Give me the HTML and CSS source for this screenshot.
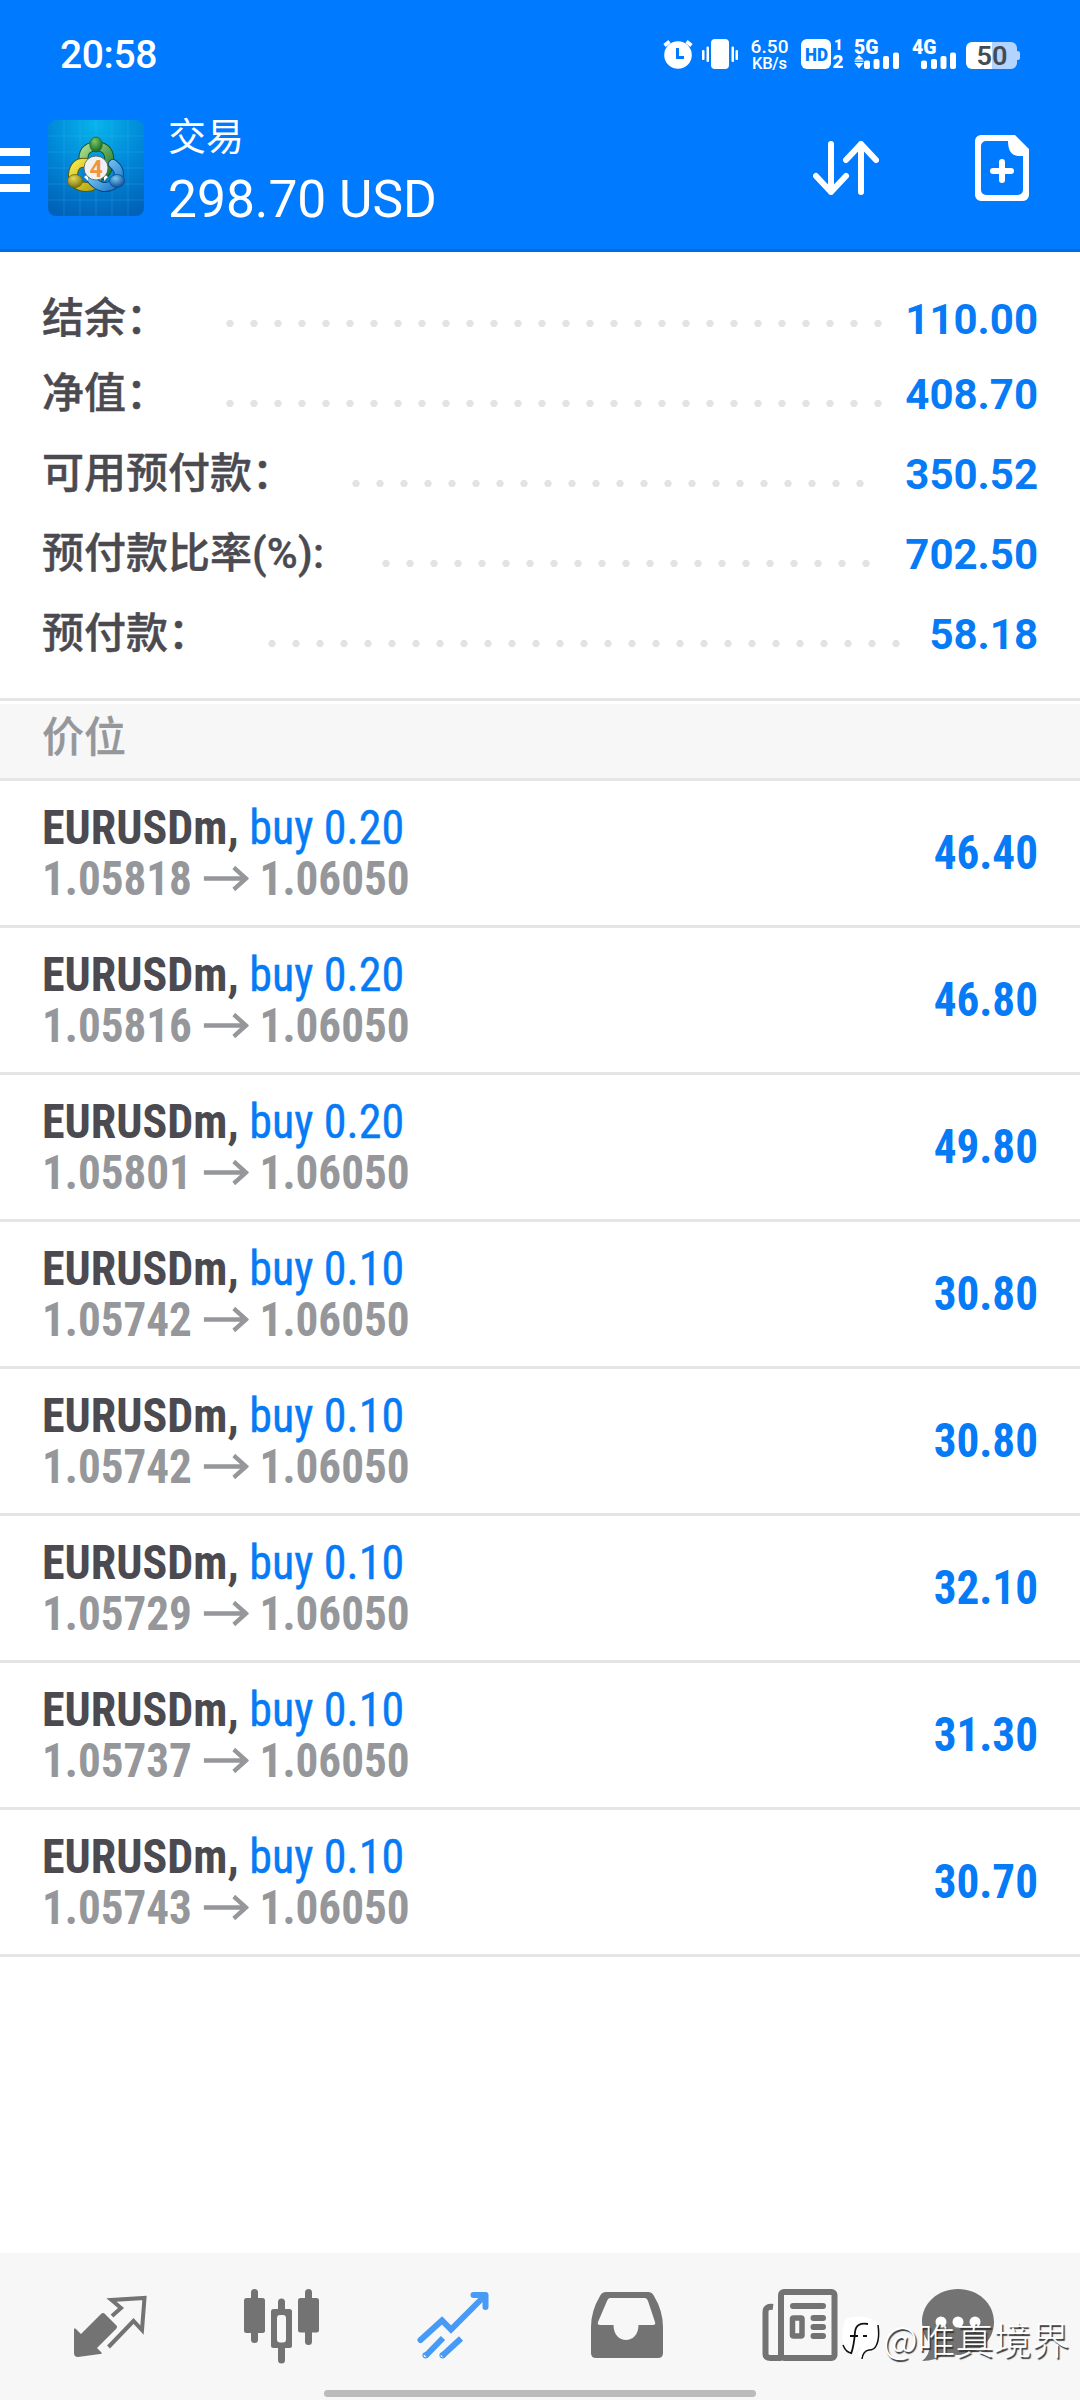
FILE: index.html
```html
<!DOCTYPE html>
<html lang="zh-CN">
<head>
<meta charset="utf-8">
<title>交易</title>
<link rel="stylesheet" href="styles.css">
</head>
<body>
<div class="app">
  <header class="header">
    <div class="status">
      <span class="clock">20:58</span>
      <svg class="status-icons" width="366" height="40" viewBox="660 34 366 40" fill="#fff">
        <circle cx="678" cy="55" r="13.8"/>
        <path d="M664.5 45.5l5-4M691.500 45.500l-5-4" stroke="#fff" stroke-width="3.600" fill="none"/>
        <path d="M677.500 48v9.500h6.500" stroke="#007aff" stroke-width="3" fill="none"/>
        <rect x="711" y="39" width="18" height="30" rx="4"/>
        <rect x="702" y="50" width="2.500" height="10" rx="1"/><rect x="706.500" y="46.500" width="2.500" height="15.500" rx="1"/>
        <rect x="731.500" y="46.500" width="2.500" height="15.500" rx="1"/><rect x="735.500" y="50" width="2.500" height="10" rx="1"/>
        <text x="750.500" y="53" font-size="19" font-weight="500" textLength="38">6.50</text>
        <text x="752" y="69" font-size="16.500" font-weight="500" textLength="35">KB/s</text>
        <rect x="801" y="39" width="30" height="30" rx="6"/>
        <text x="805" y="61" font-size="19" font-weight="900" fill="#007aff" textLength="23" lengthAdjust="spacingAndGlyphs">HD</text>
        <text x="834" y="50" font-size="15" font-weight="900">1</text>
        <text x="832.500" y="68" font-size="18" font-weight="900" textLength="11" lengthAdjust="spacingAndGlyphs">2</text>
        <text x="854" y="53.500" font-size="19.500" font-weight="900" textLength="24.500" lengthAdjust="spacingAndGlyphs">5G</text>
        <path d="M859 55l4.500 4.500h-9zM859 68.500l4.500-5.500h-9zM854.500 60.500h9v1.200h-9z"/>
        <rect x="864" y="60.500" width="6" height="8.500" rx="2"/><rect x="873.500" y="59" width="6" height="10" rx="2"/><rect x="883" y="56" width="6" height="13" rx="2"/><rect x="893" y="52.500" width="6" height="16.500" rx="2"/>
        <text x="912" y="53.500" font-size="19.500" font-weight="900" textLength="24.500" lengthAdjust="spacingAndGlyphs">4G</text>
        <rect x="921" y="60.500" width="6" height="8.500" rx="2"/><rect x="931" y="59" width="6" height="10" rx="2"/><rect x="940.500" y="56" width="6" height="13" rx="2"/><rect x="950" y="52.500" width="6" height="16.500" rx="2"/>
        <path d="M992 42h19a6 6 0 0 1 6 6v3q3 0 3 2v5q0 2-3 2v3a6 6 0 0 1-6 6h-19z" fill="#b2d4ff"/>
        <path d="M992 42h-20a6 6 0 0 0-6 6v15a6 6 0 0 0 6 6h20z"/>
        <text x="976.500" y="65" font-size="25" font-weight="600" fill="#444b55" textLength="31" lengthAdjust="spacingAndGlyphs">50</text>
      </svg>
    </div>
    <div class="toolbar">
      <div class="menu"><i></i><i></i><i></i></div>
      <svg class="logo" width="96" height="96" viewBox="0 0 96 96">
        <defs>
          <radialGradient id="bg" cx=".5" cy=".05" r="1"><stop offset="0" stop-color="#08b4ea"/><stop offset=".5" stop-color="#0088d8"/><stop offset="1" stop-color="#0062b8"/></radialGradient>
          <linearGradient id="gr" x2="1" y2="1"><stop offset="0" stop-color="#a8dc90"/><stop offset="1" stop-color="#1f7a2c"/></linearGradient>
          <linearGradient id="ye" x2="1" y2="1"><stop offset="0" stop-color="#f3e648"/><stop offset="1" stop-color="#b0a418"/></linearGradient>
          <linearGradient id="bl" x2="1" y2="1"><stop offset="0" stop-color="#8fd8fa"/><stop offset="1" stop-color="#1a78cc"/></linearGradient>
          <radialGradient id="hg" cx=".4" cy=".3" r=".7"><stop offset="0" stop-color="#7cc66c"/><stop offset="1" stop-color="#176a22"/></radialGradient>
          <radialGradient id="hy" cx=".4" cy=".3" r=".7"><stop offset="0" stop-color="#e6da58"/><stop offset="1" stop-color="#80760c"/></radialGradient>
          <radialGradient id="hb" cx=".4" cy=".3" r=".7"><stop offset="0" stop-color="#7cc8f2"/><stop offset="1" stop-color="#0c4f98"/></radialGradient>
        </defs>
        <rect width="96" height="96" rx="8" fill="url(#bg)"/>
        <path d="M16 0v96M32 0v96M48 0v96M64 0v96M80 0v96M0 16h96M0 32h96M0 48h96M0 64h96M0 80h96" stroke="#5cc4ff" stroke-opacity=".2"/>
        <g fill="none" stroke-linecap="round">
          <path d="M36 42q-3-14 12-16q15 1 13 17q-1 8-6 12" stroke="#12561c" stroke-width="10"/>
          <path d="M36 42q-3-14 12-16q15 1 13 17q-1 8-6 12" stroke="url(#gr)" stroke-width="8"/>
          <path d="M39 43q-13-2-14 12q1 12 14 12q8 0 10-7" stroke="#5e5a08" stroke-width="10"/>
          <path d="M39 43q-13-2-14 12q1 12 14 12q8 0 10-7" stroke="url(#ye)" stroke-width="8"/>
          <path d="M65 44q8 6 5 14q-4 10-15 9q-7-2-11-7" stroke="#0b447e" stroke-width="10"/>
          <path d="M65 44q8 6 5 14q-4 10-15 9q-7-2-11-7" stroke="url(#bl)" stroke-width="8"/>
        </g>
        <path d="M36 57l4-3v7zM60 57l-4-3v7z" fill="#fff"/>
        <ellipse cx="48" cy="24.500" rx="6.200" ry="7.500" fill="url(#hg)" stroke="#1a6a26" stroke-width=".8"/>
        <ellipse cx="27" cy="61" rx="7.500" ry="6.500" fill="url(#hy)" stroke="#6e660a" stroke-width=".8"/>
        <ellipse cx="69" cy="61" rx="7.500" ry="6.500" fill="url(#hb)" stroke="#0c4a90" stroke-width=".8"/>
        <circle cx="48" cy="48" r="12" fill="#f1f1f3" stroke="#4a5a50" stroke-width=".8"/>
        <text x="48" y="56.500" text-anchor="middle" font-size="23" font-weight="700" fill="#f0943e">4</text>
      </svg>
      <div class="titles">
        <div class="title">交易</div>
        <div class="balance">298.70 USD</div>
      </div>
      <svg class="sort" width="66" height="54" viewBox="0 0 66 54" fill="none" stroke="#fff" stroke-width="6" stroke-linecap="round" stroke-linejoin="round"><path d="M18 3v48M3 35l15 16 15-16M48 51V3M33 19L48 3l15 16"/></svg>
      <svg class="new" width="54" height="66" viewBox="0 0 54 66"><path d="M6 0h34l14 14v46a6 6 0 0 1-6 6H6a6 6 0 0 1-6-6V6a6 6 0 0 1 6-6zM11 6a5 5 0 0 0-5 5v44a5 5 0 0 0 5 5h32a5 5 0 0 0 5-5V21h-5Q33 20 33 6z" fill="#fff" fill-rule="evenodd"/><path d="M27 27v18M18 36h18" stroke="#fff" stroke-width="6" stroke-linecap="round"/></svg>
    </div>
  </header>

  <section class="summary">
    <div class="sum first"><span class="label">结余：</span><span class="dots" style="width:672px"></span><span class="num">110.00</span></div>
    <div class="sum"><span class="label">净值：</span><span class="dots" style="width:672px"></span><span class="num">408.70</span></div>
    <div class="sum"><span class="label">可用预付款：</span><span class="dots" style="width:528px"></span><span class="num">350.52</span></div>
    <div class="sum"><span class="label">预付款比率<span class="pct">(%):</span></span><span class="dots" style="width:504px"></span><span class="num">702.50</span></div>
    <div class="sum"><span class="label">预付款：</span><span class="dots" style="width:648px"></span><span class="num">58.18</span></div>
  </section>

  <h2 class="section">价位</h2>

  <ul class="positions">
    <li><div><p class="sym">EURUSDm, <span>buy 0.20</span></p><p class="price">1.05818<svg class="arrow" width="48" height="25" viewBox="0 0 48 25"><path d="M0 12.500h45M32 1.500l13 11-13 11"/></svg>1.06050</p></div><span class="profit">46.40</span></li>
    <li><div><p class="sym">EURUSDm, <span>buy 0.20</span></p><p class="price">1.05816<svg class="arrow" width="48" height="25" viewBox="0 0 48 25"><path d="M0 12.500h45M32 1.500l13 11-13 11"/></svg>1.06050</p></div><span class="profit">46.80</span></li>
    <li><div><p class="sym">EURUSDm, <span>buy 0.20</span></p><p class="price">1.05801<svg class="arrow" width="48" height="25" viewBox="0 0 48 25"><path d="M0 12.500h45M32 1.500l13 11-13 11"/></svg>1.06050</p></div><span class="profit">49.80</span></li>
    <li><div><p class="sym">EURUSDm, <span>buy 0.10</span></p><p class="price">1.05742<svg class="arrow" width="48" height="25" viewBox="0 0 48 25"><path d="M0 12.500h45M32 1.500l13 11-13 11"/></svg>1.06050</p></div><span class="profit">30.80</span></li>
    <li><div><p class="sym">EURUSDm, <span>buy 0.10</span></p><p class="price">1.05742<svg class="arrow" width="48" height="25" viewBox="0 0 48 25"><path d="M0 12.500h45M32 1.500l13 11-13 11"/></svg>1.06050</p></div><span class="profit">30.80</span></li>
    <li><div><p class="sym">EURUSDm, <span>buy 0.10</span></p><p class="price">1.05729<svg class="arrow" width="48" height="25" viewBox="0 0 48 25"><path d="M0 12.500h45M32 1.500l13 11-13 11"/></svg>1.06050</p></div><span class="profit">32.10</span></li>
    <li><div><p class="sym">EURUSDm, <span>buy 0.10</span></p><p class="price">1.05737<svg class="arrow" width="48" height="25" viewBox="0 0 48 25"><path d="M0 12.500h45M32 1.500l13 11-13 11"/></svg>1.06050</p></div><span class="profit">31.30</span></li>
    <li><div><p class="sym">EURUSDm, <span>buy 0.10</span></p><p class="price">1.05743<svg class="arrow" width="48" height="25" viewBox="0 0 48 25"><path d="M0 12.500h45M32 1.500l13 11-13 11"/></svg>1.06050</p></div><span class="profit">30.70</span></li>
  </ul>

  <nav class="tabs">
    <svg width="74" height="76" viewBox="73 2288 74 76"><path d="M74 2330q0-3 2-1l5 5 20-20q2-2 4 0l11 11q2 2 0 4l-19 19 4 4q2 2-1 2l-22 3q-4 0-4-4z" fill="#737373"/><path d="M112 2316l9-8-9.500-8 33-2-2.500 32-8.500-9-25 26" fill="none" stroke="#737373" stroke-width="4"/></svg>
    <svg width="76" height="76" viewBox="243 2288 76 76" fill="#737373"><rect x="251" y="2289" width="7" height="54" rx="3.500"/><rect x="244" y="2298" width="21" height="35" rx="2.500"/><rect x="278" y="2298.500" width="7" height="65" rx="3.500"/><rect x="271" y="2309" width="21" height="39" rx="2.500"/><rect x="277" y="2315" width="9" height="27.500" rx="3" fill="#f7f7f7"/><rect x="305" y="2289" width="7" height="56" rx="3.500"/><rect x="298" y="2298" width="21" height="34.500" rx="2.500"/></svg>
    <svg width="72" height="76" viewBox="417.500 2288 72 76" fill="none" stroke="#479bf6" stroke-width="6"><path d="M421 2340l21.500-19.500 9 9 34-34" stroke-linecap="round"/><path d="M474 2295h12v12" stroke-linecap="round" stroke-linejoin="round"/><path d="M443.500 2338l-17.500 18M461.500 2338.500l-19 17.500"/><circle cx="426" cy="2355.300" r=".6" stroke-width="5"/><circle cx="443" cy="2355.300" r=".6" stroke-width="5"/></svg>
    <svg width="74" height="76" viewBox="590 2288 74 76"><path d="M606 2292h42q4 0 6 4 9 15 9 31v26q0 5-5 5h-62q-5 0-5-5v-26q0-16 9-31 2-4 6-4zM610 2298q-2 0-3 3l-9 21q-1 3 2 3h13.500c0 20 25 20 25 0H653q3 0 2-3l-7-21q-1-3-3-3z" fill="#737373" fill-rule="evenodd"/></svg>
    <svg width="76" height="76" viewBox="762 2288 76 76" fill="none" stroke="#737373" stroke-width="6"><rect x="781" y="2292" width="53.500" height="66" rx="3"/><path d="M773 2307q-7.500-1-7.500 5v42q0 4 5 4h11"/><path d="M793 2306h30M813.500 2318h9.500M813.500 2327h9.500M813.500 2336h9.500" stroke-linecap="round"/><rect x="792.500" y="2318" width="9.500" height="18" rx="1" stroke-width="5.500"/></svg>
    <div class="chat">
      <svg width="74" height="76" viewBox="921 2288 74 76"><path d="M958 2289c20 0 36 14 36 33s-16 33-36 33q-6 0-12-2-10 8-24 8 8-6 8-17-8-9-8-22c0-19 16-33 36-33z" fill="#737373"/><g fill="#fff"><circle cx="941" cy="2322" r="5.500"/><circle cx="958" cy="2322" r="5.500"/><circle cx="975" cy="2322" r="5.500"/></g></svg>
      <div class="watermark">
        <svg width="40" height="46" viewBox="838 2318 40 46"><path d="M846 2321q12-3 22 0 7 2 8 10 1 12-3 18-2 4-6 4-6 0-8 8l-3-4q1-4 4-6l-2-1q-3 4-7 6-6 1-9-8-3-8-1-17 1-8 5-10z" fill="#fff"/><path d="M866 2327q-12-2-13 8-1 14-4 22M848 2339h8M861 2339h4" fill="none" stroke="#111" stroke-width="1.800"/><path d="M876 2328q2 14-2 21-2 4-7 4-6 1-7 9M841 2348q3 8 9 8" fill="none" stroke="#111" stroke-width="1.500"/></svg>
        <span>@唯真境界</span>
      </div>
    </div>
    <div class="gesture"></div>
  </nav>
</div>
</body>
</html>
```
FILE: styles.css
```css
* { box-sizing: border-box; margin: 0; padding: 0; }
body { background: #fff; font-family: Roboto, "Noto Sans CJK SC", sans-serif; color: #4b4a50; }
svg { display: block; flex: none; }
.app { width: 1080px; height: 2400px; display: flex; flex-direction: column; overflow: hidden; }

.header { height: 252px; background: #007aff; border-bottom: 3px solid #006de0; color: #fff; }
.status { height: 108px; padding: 0 54px 0 60px; display: flex; justify-content: space-between; align-items: center; }
.clock { font-size: 39px; line-height: 108px; font-weight: 500; letter-spacing: -.4px; margin-top: 1px; }
.toolbar { height: 120px; display: flex; align-items: center; }
.menu { width: 30px; display: flex; flex-direction: column; gap: 10px; margin-top: 4px; }
.menu i { height: 8px; background: #fff; }
.logo { margin-left: 18px; }
.titles { margin-left: 24px; flex: 1; padding-top: 5px; }
.title { font-size: 38px; line-height: 58px; }
.balance { font-size: 51.5px; line-height: 67px; }
.sort { margin-right: 96px; }
.new { margin-right: 51px; }

.summary { padding: 28px 42px 23px 42px; border-bottom: 3px solid #e5e5e5; }
.sum { height: 80px; display: flex; font-size: 42px; line-height: 80px; font-weight: 500; }
.sum.first { height: 75px; }
.label { -webkit-text-stroke: .4px #4b4a50; white-space: nowrap; line-height: 78px; }
.pct { letter-spacing: .3px; }
.dots { align-self: flex-end; height: 7px; margin: 0 0 28px 50px; background: radial-gradient(circle at center, #e3e3e3 3.3px, transparent 4px) 0 0 / 24px 7px; }
.num { margin-left: auto; color: #067bf5; font-weight: 700; }

.section { height: 77px; margin-top: 3px; padding-left: 42px; background: #f7f7f7; border-bottom: 3px solid #e5e5e5; color: #95979b; font-size: 42px; line-height: 68px; font-weight: 500; -webkit-text-stroke: .3px #95979b; }

.positions { list-style: none; font-family: "Roboto Condensed", Roboto, sans-serif; font-size: 48px; font-weight: 700; }
.positions li { height: 147px; padding: 0 42px; display: flex; justify-content: space-between; border-bottom: 3px solid #e5e5e5; }
.positions li > div { padding-top: 21px; }
.sym, .price { line-height: 51px; white-space: pre; transform-origin: 0 50%; }
.sym { transform: scaleX(.958); }
.sym span { color: #067bf5; font-weight: 400; -webkit-text-stroke: .4px #067bf5; }
.price { color: #95979b; display: flex; transform: scaleX(.94); }
.arrow { margin: 13px 12px 0 12px; fill: none; stroke: #95979b; stroke-width: 4.5; }
.profit { color: #067bf5; line-height: 144px; transform: scaleX(.94); transform-origin: 100% 50%; }

.tabs { height: 147px; margin-top: auto; background: #f7f7f7; display: grid; grid-template-columns: 170px 174px 173px 172px 149px 1fr; grid-template-rows: 111px 36px; padding-left: 73px; align-items: end; }
.chat { display: flex; position: relative; padding-left: 10px; }
.watermark { position: absolute; left: -71px; top: 27px; display: flex; align-items: center; color: #fff; font-size: 38px; line-height: 44px; text-shadow: 1.5px 1.5px 1px #333; font-family: "Noto Sans CJK SC", sans-serif; font-weight: 300; white-space: nowrap; }
.watermark span { margin-left: 3px; }
.gesture { grid-row: 2; grid-column: 1 / -1; align-self: start; width: 432px; height: 7px; margin: 26px 0 0 251px; border-radius: 4px; background: #bbb; }
```
